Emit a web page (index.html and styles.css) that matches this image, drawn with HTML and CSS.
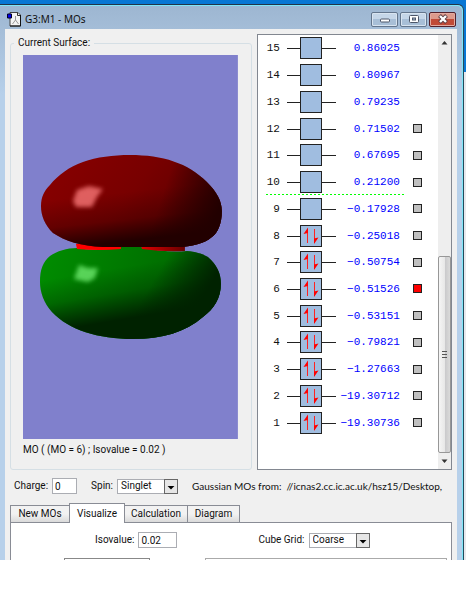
FILE: index.html
```html
<!DOCTYPE html>
<html lang="en">
<head>
<meta charset="utf-8">
<title>G3:M1 - MOs</title>
<link rel="stylesheet" href="styles.css">
</head>
<body>
<div class="desktop">
<main class="window">
  <header class="titlebar">
    <svg class="app-icon" width="15" height="15" viewBox="0 0 15 15" aria-hidden="true">
      <path d="M3 .5h8l2.500 2.500v11H3z" fill="#f4f4f4" stroke="#444"/>
      <path d="M13.500 3v11H3" fill="none" stroke="#111"/>
      <path d="M10.500 1v2.500h2.500" fill="none" stroke="#333"/>
      <path d="M8.500 4v4l-3 4M8.500 8l3 4" fill="none" stroke="#999"/>
      <path d="M.5 2h4v4h-4z" fill="#0000f0" stroke="#002"/>
    </svg>
    <h1 class="title">G3:M1 - MOs</h1>
    <div class="captions">
      <button class="caption" aria-label="Minimize"><svg width="10" height="10" viewBox="0 0 10 10"><rect x=".5" y="5" width="9" height="3" rx="1" fill="#fff" stroke="#4c5669"/></svg></button>
      <button class="caption" aria-label="Maximize"><svg width="10" height="10" viewBox="0 0 10 10"><rect x=".5" y="1.500" width="9" height="7" rx="1" fill="#fff" stroke="#4c5669"/><rect x="3.500" y="4" width="3" height="2" fill="#a9bdd4" stroke="#4c5669"/></svg></button>
      <button class="caption caption-close" aria-label="Close"><svg width="10" height="10" viewBox="0 0 10 10"><path d="M1.500 1.500l7 7M8.500 1.500l-7 7" stroke="#5a3a40" stroke-width="4"/><path d="M2 2l6 6M8 2l-6 6" stroke="#fff" stroke-width="2.400"/></svg></button>
    </div>
  </header>
  <div class="client">
    <div class="panes">
      <fieldset class="surface">
        <legend>Current Surface:</legend>
        <svg class="scene" viewBox="0 0 215 384" preserveAspectRatio="none" role="img" aria-label="Molecular orbital surface">
          <defs>
            <path id="top" d="M107 100C140 100 165 108 184 127C194 137 199 146 199 156C199 168 195 178 189 182C181 189 168 191 160 192H80C58 191 42 186 30 178C22 170 18 161 18 151C18 142 21 136 27 130C35 120 46 112 60 107C74 102 90 100 107 100Z"/>
            <path id="bottom" d="M54 193Q74 197 98 192H118Q143 198 164 196C174 197 180 199 185 202C194 210 198 218 198 229C198 243 191 254 180 262C163 277 139 284 110 284C75 284 46 275 29 257C21 248 17 237 17 227C17 214 20 207 27 201C34 196 44 193 54 193Z"/>
            <linearGradient id="redBase" x1="0" y1=".2" x2="1" y2=".6"><stop offset="0" stop-color="#880000"/><stop offset=".5" stop-color="#780000"/><stop offset="1" stop-color="#580000"/></linearGradient>
            <linearGradient id="redShade" gradientUnits="userSpaceOnUse" x1="94" y1="138" x2="100" y2="192"><stop offset="0" stop-color="#220000" stop-opacity="0"/><stop offset=".5" stop-color="#220000" stop-opacity=".3"/><stop offset=".9" stop-color="#220000"/></linearGradient>
            <linearGradient id="redSide" gradientUnits="userSpaceOnUse" x1="140" y1="138" x2="195" y2="156"><stop offset="0" stop-color="#220000" stop-opacity="0"/><stop offset="1" stop-color="#220000"/></linearGradient>
            <linearGradient id="greenBase" x1="0" y1=".2" x2="1" y2=".4"><stop offset="0" stop-color="#008c00"/><stop offset=".5" stop-color="#007600"/><stop offset="1" stop-color="#006000"/></linearGradient>
            <linearGradient id="greenShade" gradientUnits="userSpaceOnUse" x1="88" y1="214" x2="98" y2="274"><stop offset="0" stop-color="#002200" stop-opacity="0"/><stop offset=".4" stop-color="#002200" stop-opacity=".3"/><stop offset=".85" stop-color="#002200"/></linearGradient>
            <linearGradient id="greenSide" gradientUnits="userSpaceOnUse" x1="142" y1="206" x2="186" y2="232"><stop offset="0" stop-color="#002200" stop-opacity="0"/><stop offset="1" stop-color="#002200"/></linearGradient>
            <linearGradient id="bridge"><stop offset="0" stop-color="#f00"/><stop offset=".5" stop-color="#f00"/><stop offset="1" stop-color="#600"/></linearGradient>
            <filter id="soft" x="-40%" y="-40%" width="180%" height="180%"><feGaussianBlur stdDeviation="2"/></filter>
          </defs>
          <rect width="215" height="384" fill="#8080cc"/>
          <use href="#bottom" fill="url(#greenBase)"/>
          <use href="#bottom" fill="url(#greenShade)"/>
          <use href="#bottom" fill="url(#greenSide)"/>
          <path d="M53 189h45v5q-22 2-44 0zM118 190h44v6q-22 1-43-2z" fill="url(#bridge)"/>
          <use href="#top" fill="url(#redBase)"/>
          <use href="#top" fill="url(#redShade)"/>
          <use href="#top" fill="url(#redSide)"/>
          <path d="M54 135l12-4 14 3-6 8-5 10H53l-3-6z" fill="#f07070" opacity=".85" filter="url(#soft)"/>
          <path d="M56 210l9 3h10l-3 10-7 4-14-3z" fill="#6ee86e" opacity=".8" filter="url(#soft)"/>
        </svg>
        <p class="surface-caption">MO ( (MO = 6) ; Isovalue = 0.02 )</p>
      </fieldset>
      <section class="orbitals" aria-label="Molecular orbitals">
        <ol class="levels" id="levels"></ol>
        <div class="scrollbar" aria-hidden="true">
          <svg width="13" height="16" viewBox="0 0 13 16"><path d="M3.500 9.500h6L6.500 6z" fill="#333"/></svg>
          <div class="thumb"><i></i><i></i><i></i></div>
          <svg width="13" height="16" viewBox="0 0 13 16"><path d="M3.500 6.500h6L6.500 10z" fill="#333"/></svg>
        </div>
      </section>
    </div>
    <div class="settings">
      <label for="charge">Charge:</label>
      <input id="charge" class="field field-charge" value="0">
      <label for="spin" class="spin-label">Spin:</label>
      <span class="combo"><select id="spin"><option>Singlet</option></select><svg class="drop" width="14" height="15" viewBox="0 0 14 15" aria-hidden="true"><path d="M3 7h8l-4 4z" fill="#000"/></svg></span>
      <span class="source">Gaussian MOs from:&nbsp; //icnas2.cc.ic.ac.uk/hsz15/Desktop,</span>
    </div>
    <nav class="tabs" role="tablist">
      <button role="tab" class="tab">New MOs</button>
      <button role="tab" class="tab tab-active" aria-selected="true">Visualize</button>
      <button role="tab" class="tab tab-wide">Calculation</button>
      <button role="tab" class="tab tab-narrow">Diagram</button>
    </nav>
    <section class="tab-page">
      <div class="tab-row">
        <label for="iso">Isovalue:</label>
        <input id="iso" class="field field-iso" value="0.02">
        <label for="grid" class="grid-label">Cube Grid:</label>
        <span class="combo"><select id="grid"><option>Coarse</option></select><svg class="drop" width="14" height="15" viewBox="0 0 14 15" aria-hidden="true"><path d="M3 7h8l-4 4z" fill="#000"/></svg></span>
      </div>
      <div class="next-row"><span class="next-combo"></span><span class="next-group"></span></div>
    </section>
  </div>
</main>
</div>
<script src="levels.js"></script>
</body>
</html>
```
FILE: styles.css
```css
* { box-sizing: border-box; }
body { margin: 0; background: #fff; color: #111; font: 10px/14px Roboto, "Liberation Sans", sans-serif; }
button, input, select { font: inherit; color: inherit; margin: 0; }
.desktop { margin-right: 6px; padding: 4px 2px 0 0; background: linear-gradient(#0877d4 0 72px, #e8e8ec 72px); }
.window { border-top: 1px solid #223548; border-right: 1px solid #234a5c; border-top-right-radius: 6px; padding: 0 6px 0 5px; background: linear-gradient(#9db6d1, #b7d0ea 90px); box-shadow: inset -1px 1px #7fe6f8; overflow: hidden; }
.titlebar { display: flex; align-items: center; height: 24px; padding: 4px 1px 0 2px; }
.app-icon { flex: none; }
.title { flex: 1; margin: 0 0 0 3px; font: 10px/14px "Noto Sans", sans-serif; }
.captions { display: flex; gap: 2px; }
.caption { display: flex; align-items: center; justify-content: center; width: 27px; height: 15px; padding: 0; border: 1px solid #63758c; border-radius: 2px; background: linear-gradient(#c5d6e8 50%, #a8bfd7 50%); box-shadow: inset 0 0 0 1px #d8e4f0; }
.caption-close { background: linear-gradient(#dd9a8c 50%, #c04a37 50%); border-color: #54202a; box-shadow: inset 0 0 0 1px #e2aaa0; }
.client { background: #f0f0f0; padding: 5px 5px 0; }
.panes { display: grid; grid-template-columns: 243fr 196fr; gap: 5px; }
.surface { min-width: 0; margin: 2px 0 0; padding: 5px 13px 0 12px; border: 1px solid #d5dfe5; border-radius: 3px; }
.surface legend { margin-left: -9px; padding: 0 4px; height: 14px; }
.scene { display: block; width: 100%; height: 384px; }
.surface-caption { margin: 4px 0 12px; }
.orbitals { min-width: 0; display: flex; border: 1px solid #828790; background: #fff; }
.levels { flex: 1; display: flex; flex-direction: column; height: 401px; margin: 0; padding: 0; list-style: none; font: 11px/14px "Liberation Mono", monospace; }
.level { flex: 1; display: flex; align-items: center; }
.level-number { width: 22px; text-align: right; }
.level svg { margin-left: 7px; flex: none; }
.energy { width: 64px; text-align: right; color: #00f; white-space: nowrap; }
.level input { appearance: none; width: 9px; height: 9px; margin: 0 0 0 13px; border: 1px solid #222; background: #c0c0c0; }
.level input:checked { background: #f00; }
.homo { background: repeating-linear-gradient(90deg, #0f0 0 2px, transparent 2px 4px) 8px 100% / 139px 1px no-repeat; }
.scrollbar { width: 13px; display: flex; flex-direction: column; justify-content: space-between; background: #eee; }
.scrollbar svg { flex: none; }
.thumb { height: 197px; margin-top: auto; border: 1px solid #979797; border-radius: 2px; background: linear-gradient(90deg, #f5f5f5, #e8e8e8 50%, #c8c8ca 51%, #dadada); display: flex; flex-direction: column; align-items: center; justify-content: center; gap: 2px; }
.thumb i { width: 5px; height: 1px; background: #555; }
.settings { display: flex; align-items: center; height: 34px; padding: 0 0 2px 4px; white-space: nowrap; }
.field { height: 16px; padding: 0 2px; border: 1px solid #abadb3; background: #fff; }
.field-charge { width: 25px; margin-left: 4px; }
.spin-label { margin-left: 14px; }
.combo { flex: none; position: relative; width: 61px; height: 15px; margin-left: 4px; }
.combo select { display: block; appearance: none; width: 100%; height: 100%; padding: 0 3px; line-height: 12px; border: 1px solid #abadb3; border-radius: 0; background: #fff; }
.drop { position: absolute; top: 0; right: 0; border: 1px solid #666; background: #e6e6e6; pointer-events: none; }
.source { margin-left: 14px; font: 10px/14px Lato, sans-serif; }
.tabs { display: flex; align-items: flex-end; height: 19px; margin-bottom: -1px; }
.tab { width: 60px; height: 18px; padding: 0; border: 1px solid #898c95; margin-right: -1px; background: linear-gradient(#f2f2f2 50%, #dadada); }
.tab-wide { width: 64px; }
.tab-narrow { width: 53px; }
.tab-active { width: 56px; height: 20px; background: #fff; border-bottom: 0; z-index: 1; }
.tab-page { border: 1px solid #898c95; border-bottom: 0; background: #fff; padding-top: 8px; }
.tab-row { display: flex; align-items: center; height: 18px; padding-left: 84px; }
.field-iso { width: 39px; margin-left: 4px; }
.grid-label { margin-left: 81px; }
.next-row { display: flex; padding: 9px 4px 0 53px; }
.next-combo { width: 86px; height: 2px; border: 1px solid #888; border-bottom: 0; }
.next-group { flex: 1; height: 2px; margin-left: 55px; border: 1px solid #aaa; border-bottom: 0; }
```
FILE: levels.js
```js
const energies = ["0.86025", "0.80967", "0.79235", "0.71502", "0.67695", "0.21200", "−0.17928", "−0.25018", "−0.50754", "−0.51526", "−0.53151", "−0.79821", "−1.27663", "−19.30712", "−19.30736"];
const electrons = '<path d="M7.500 4v14M14.500 4v14" stroke="#f22"/><path d="M8 2.500V8L3.500 9zM14 19v-5.500l4.500-1z" fill="#f00"/>';
document.getElementById("levels").innerHTML = energies.map((energy, i) => {
  const n = 15 - i;
  const box = n <= 12 ? `<input type="checkbox" aria-label="Orbital ${n}"${n === 6 ? " checked" : ""}>` : "";
  return `<li class="level${n === 10 ? " homo" : ""}"><span class="level-number">${n}</span>
    <svg width="49" height="22" viewBox="0 0 49 22" aria-hidden="true"><path d="M0 11.500h49" stroke="#222"/><rect x="13.500" y=".5" width="21" height="21" fill="#a0bde0" stroke="#222"/>${n <= 8 ? `<g transform="translate(13)">${electrons}</g>` : ""}</svg>
    <span class="energy">${energy}</span>${box}</li>`;
}).join("");
```
